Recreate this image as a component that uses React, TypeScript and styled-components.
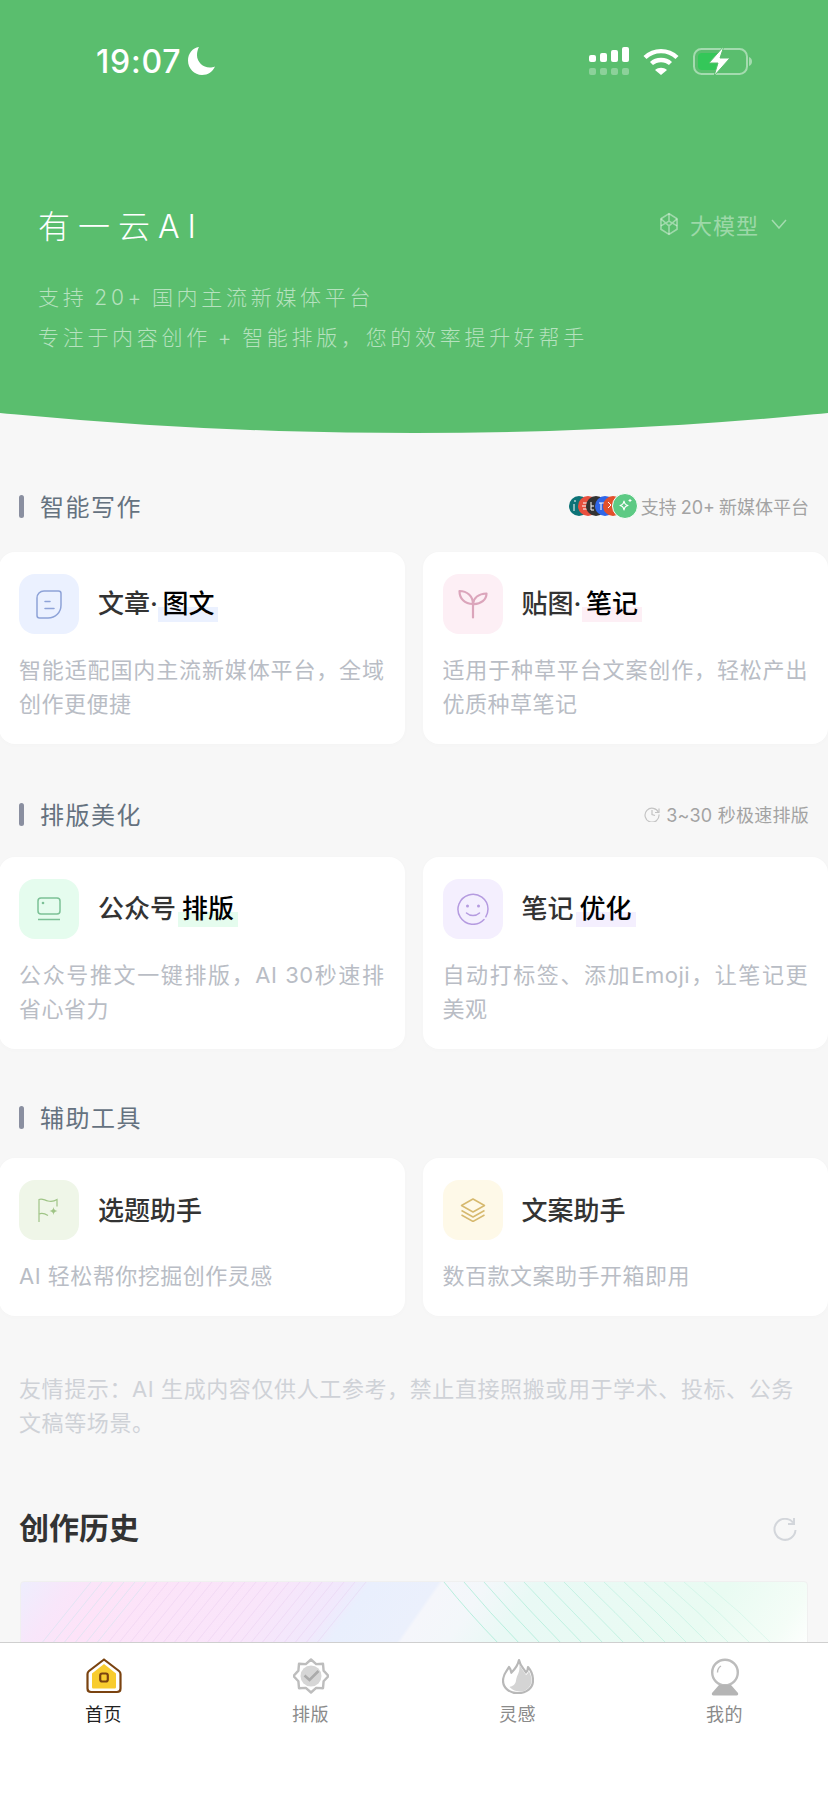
import React from 'react';
import styled, { createGlobalStyle } from 'styled-components';

const GlobalStyle = createGlobalStyle`
  html, body {
    margin: 0;
    padding: 0;
    background: #f7f7f7;
    font-family: Inter, "Noto Sans CJK SC", sans-serif;
  }
`;

const Page = styled.div`
  position: relative;
  width: 828px;
  height: 1800px;
  overflow: hidden;
  background: #f7f7f7;
`;

const Header = styled.header`
  height: 433px;
  padding-top: 44px;
  box-sizing: border-box;
  background: #5abe6e;
  clip-path: ellipse(1378px 433px at 50% 0);
`;

const StatusBar = styled.div`
  display: flex;
  align-items: center;
  justify-content: space-between;
  height: 34px;
  padding: 0 75px 0 96px;
  color: #fff;
`;

const StatusTime = styled.div`
  display: flex;
  align-items: center;
  gap: 7px;
  font-family: Inter, sans-serif;
  font-size: 32px;
  font-weight: 500;
  letter-spacing: 0.8px;
`;

const StatusIcons = styled.div`
  display: flex;
  align-items: center;
  gap: 14px;
`;

const TitleRow = styled.div`
  display: flex;
  align-items: center;
  justify-content: space-between;
  height: 44px;
  margin-top: 124px;
  padding: 0 41px 0 38px;
`;

const AppTitle = styled.h1`
  margin: 0;
  font-size: 32px;
  font-weight: 300;
  letter-spacing: 8px;
  color: #fff;
`;

const ModelPicker = styled.div`
  display: flex;
  align-items: center;
  gap: 12px;
  font-size: 22px;
  letter-spacing: 1px;
  color: rgba(255, 255, 255, 0.42);
`;

const SubTitle = styled.p`
  margin: 32px 0 0;
  padding: 0 38px;
  font-size: 21px;
  line-height: 40px;
  letter-spacing: 3.7px;
  word-spacing: -2.7px;
  font-weight: 300;
  white-space: nowrap;
  color: rgba(255, 255, 255, 0.56);
`;

const SectionHead = styled.div<{ $top: number; $bottom: number }>`
  display: flex;
  align-items: center;
  justify-content: space-between;
  height: 34px;
  margin: ${(p) => p.$top}px 19px ${(p) => p.$bottom}px 19px;
`;

const SectionTitle = styled.h2`
  display: flex;
  align-items: center;
  gap: 16px;
  margin: 0;
  padding-bottom: 2px;
  font-size: 24px;
  font-weight: 400;
  letter-spacing: 1.5px;
  color: #65727f;

  &::before {
    content: '';
    width: 5px;
    height: 23px;
    margin-top: 2px;
    border-radius: 3px;
    background: #8a8fa0;
  }
`;

const SectionNote = styled.div<{ $loose?: boolean }>`
  display: flex;
  align-items: center;
  gap: ${(p) => (p.$loose ? 6 : 3)}px;
  font-size: 18px;
  letter-spacing: ${(p) => (p.$loose ? 0.25 : 0)}px;
  word-spacing: ${(p) => (p.$loose ? 0 : -1)}px;
  color: #a3a3a3;
`;

const LogoStack = styled.div`
  display: flex;
  align-items: center;
`;

const Logo = styled.span<{ $color: string }>`
  display: flex;
  align-items: center;
  justify-content: center;
  width: 20px;
  height: 20px;
  margin-right: -11.500px;
  border-radius: 50%;
  background: ${(p) => p.$color};
`;

const MainLogo = styled.span`
  position: relative;
  display: flex;
  align-items: center;
  justify-content: center;
  box-sizing: border-box;
  width: 26px;
  height: 26px;
  border: 1px solid #fff;
  border-radius: 50%;
  background: #5dca84;
`;

const CardGrid = styled.div`
  display: grid;
  grid-template-columns: 1fr 1fr;
  gap: 18px;
  margin-left: -1px;
`;

const Card = styled.div`
  padding: 22px 20px 23px;
  border-radius: 16px;
  background: #fff;
  box-shadow: 0 1px 6px rgba(0, 0, 0, 0.015);
`;

const CardHead = styled.div`
  display: flex;
  align-items: center;
  gap: 19px;
`;

const IconBox = styled.div<{ $bg: string }>`
  display: flex;
  align-items: center;
  justify-content: center;
  flex: none;
  width: 60px;
  height: 60px;
  border-radius: 16px;
  background: ${(p) => p.$bg};
`;

const CardTitle = styled.div`
  display: flex;
  align-items: flex-start;
  padding-top: 2px;
  font-size: 26px;
  line-height: 30px;
  font-weight: 500;
  color: #333;
`;

const Dot = styled.span`
  margin-right: -1.500px;
`;

const Mark = styled.span<{ $bg: string }>`
  display: block;
  margin-left: 2px;
  padding: 0 4px 3px;
  color: #000;
  background: linear-gradient(transparent 18px, ${(p) => p.$bg} 18px);
`;

const CardDesc = styled.p`
  margin: 19px 0 0;
  font-size: 22px;
  line-height: 34px;
  letter-spacing: 0.5px;
  text-align: justify;
  color: #b9bdc5;
`;

const Tip = styled.p`
  margin: 56px 20px 0 19px;
  font-size: 22px;
  line-height: 34px;
  letter-spacing: 0.6px;
  color: #cfd2d7;
`;

const HistoryHead = styled.div`
  display: flex;
  align-items: center;
  justify-content: space-between;
  height: 44px;
  margin: 66px 31px 31px 19px;

  svg {
    margin-top: 4px;
  }
`;

const HistoryTitle = styled.h2`
  margin: 0;
  padding-bottom: 5px;
  font-size: 30px;
  font-weight: 700;
  color: #333;
`;

const HistoryCover = styled.div`
  position: relative;
  height: 70px;
  margin: 0 20px;
  overflow: hidden;
  border: 1px solid #f0f0f0;
  border-radius: 4px;
  background: linear-gradient(
    125deg,
    #eeeefd 0%,
    #f8e6fa 6%,
    #fde3f8 11%,
    #f9e5fa 30%,
    #f1e8fc 39%,
    #e9effd 42%,
    #ebf0fc 50%,
    #f5f6fb 50.500%,
    #f3f7fa 56%,
    #e9f9f5 62%,
    #e9fbf2 85%,
    #f4fdf7 95%,
    #fff 100%
  );
`;

const CoverLines = styled.svg`
  position: absolute;
  top: 0;
  left: 0;
`;

const TabBar = styled.nav`
  position: absolute;
  left: 0;
  right: 0;
  bottom: 0;
  display: grid;
  grid-template-columns: repeat(4, 1fr);
  height: 158px;
  box-sizing: border-box;
  border-top: 1px solid #cfcfcf;
  background: #fff;
`;

const Tab = styled.div<{ $active?: boolean }>`
  display: flex;
  flex-direction: column;
  align-items: center;
  padding-top: 15px;
  font-size: 18px;
  line-height: 26px;
  letter-spacing: 0.5px;
  color: ${(p) => (p.$active ? '#222' : '#8a8a8a')};
`;

const TabIcon = styled.div`
  display: flex;
  align-items: flex-start;
  height: 44px;
`;

const SignalIcon = () => (
  <svg width="40" height="28" viewBox="0 0 40 28" fill="#fff">
    <rect x="0" y="8" width="7" height="7" rx="2" />
    <rect x="11" y="6" width="7" height="9" rx="2" />
    <rect x="22" y="3" width="7" height="12" rx="2" />
    <rect x="33" y="0" width="7" height="15" rx="2" />
    <g opacity="0.3">
      <rect x="0" y="21" width="7" height="7" rx="2" />
      <rect x="11" y="21" width="7" height="7" rx="2" />
      <rect x="22" y="21" width="7" height="7" rx="2" />
      <rect x="33" y="21" width="7" height="7" rx="2" />
    </g>
  </svg>
);

const WifiIcon = () => (
  <svg width="36" height="27" viewBox="0 0 36 27" fill="none" stroke="#fff" strokeWidth="4.4">
    <path d="M2 9.500C11 1 25 1 34 9.500" />
    <path d="M8.500 15.500C13.500 10.800 22.500 10.800 27.500 15.500" />
    <path d="M12 22l6 5 6-5c-3.500-3-8.500-3-12 0z" fill="#fff" stroke="none" />
  </svg>
);

const BatteryIcon = () => (
  <svg width="60" height="30" viewBox="0 0 60 30" fill="none">
    <rect x="1" y="3" width="53" height="25" rx="7.500" stroke="#fff" strokeOpacity="0.45" strokeWidth="2" />
    <path d="M56 11c2 .6 3 2.300 3 4.500s-1 3.900-3 4.500z" fill="#fff" fillOpacity="0.45" />
    <rect x="5" y="7" width="22" height="17" rx="4" fill="#34c759" />
    <path d="M31 0L16 17h9l-4 13 16-18h-10z" fill="#fff" stroke="#5abe6e" strokeWidth="1" />
  </svg>
);

const MoonIcon = () => (
  <svg width="27" height="28" viewBox="0 0 27 28" fill="#fff">
    <path d="M11 0C4.500 1 0 6.500 0 13.500 0 21.500 6.300 28 14 28c6 0 10.800-3.300 13-8.500-1.600.8-3.400 1.100-5.300 1.100C15 20.600 9 15 9 8.300 9 5.200 9.700 2.400 11 0z" />
  </svg>
);

const CubeIcon = () => (
  <svg width="18" height="24" viewBox="0 0 19 24" fill="none" stroke="#fff" strokeOpacity="0.42" strokeWidth="1.700" strokeLinejoin="round">
    <path d="M9.500 1L18 6.500v11L9.500 23 1 17.500v-11z" />
    <path d="M9.500 1v8L1 14M9.500 9l8.500 5M9.500 23v-9L1 6.500M9.500 14L18 6.500" />
  </svg>
);

const ChevronIcon = () => (
  <svg width="16" height="10" viewBox="0 0 16 10" fill="none" stroke="#fff" strokeOpacity="0.45" strokeWidth="1.500">
    <path d="M1 1l7 8 7-8" />
  </svg>
);

const SparkleIcon = () => (
  <svg width="16" height="16" viewBox="0 0 16 16" fill="none" stroke="#fff" strokeWidth="1.200" strokeLinejoin="round">
    <path d="M7 3c.5 3 1.500 4 4 4.500-2.500.5-3.500 1.500-4 4.500-.5-3-1.500-4-4-4.500 2.500-.5 3.500-1.500 4-4.500z" />
    <path d="M13 1v3M11.500 2.500h3" strokeWidth="1" />
  </svg>
);

const LogoMark = ({ d }: { d: string }) => (
  <svg width="20" height="20" viewBox="0 0 20 20" stroke="#fff" strokeWidth="1" fill="none">
    <path d={d} />
  </svg>
);

const ClockIcon = () => (
  <svg width="16" height="16" viewBox="0 0 16 16" fill="none" stroke="#c4c4c4" strokeWidth="1.200">
    <path d="M14.500 6.500A7 7 0 1 0 15 8.500" />
    <path d="M8 4v4.500l3 1M15 2.500v4h-4" />
  </svg>
);

const DocIcon = () => (
  <svg width="26" height="29" viewBox="0 0 26 29" fill="none" stroke="#8ea3d8" strokeWidth="1.500">
    <path d="M8 1h14.500c1.400 0 2.500 1.100 2.500 2.500V15c0 7.500-5.500 13-13 13H3.500C2 28 1 27 1 25.500V8c0-4 3-7 7-7z" />
    <path d="M9 11.500h5M9 18.500h9" strokeLinecap="round" />
  </svg>
);

const SproutIcon = () => (
  <svg width="30" height="30" viewBox="0 0 30 30" fill="none" stroke="#dba5bb" strokeWidth="2.200" strokeLinecap="round" strokeLinejoin="round">
    <path d="M15 28.500V15" />
    <path d="M15 15C15 7 9 2 1.500 2 1.500 9.500 6.500 15 15 15z" />
    <path d="M15 15c.5-6 5.500-10 13.500-10.500C28.500 10.500 23 15.500 15 15z" />
  </svg>
);

const ScreenIcon = () => (
  <svg width="24" height="24" viewBox="0 0 24 24" fill="none" stroke="#7cc196" strokeWidth="1.500">
    <rect x="1" y="1" width="22" height="16" rx="3" />
    <path d="M1 22.500h22" />
    <circle cx="6" cy="6" r="1.300" fill="#7cc196" stroke="none" />
  </svg>
);

const SmileIcon = () => (
  <svg width="32" height="32" viewBox="0 0 32 32" fill="none" stroke="#b59be0" strokeWidth="1.500" strokeLinecap="round">
    <path d="M27 26.500A15 15 0 1 1 31 16c0 3-.8 5.500-2.200 7.800" />
    <path d="M9.500 20c3.500 3.300 9.500 3.300 13 0" />
    <circle cx="10.500" cy="13" r="1.500" fill="#b59be0" stroke="none" />
    <circle cx="21.500" cy="13" r="1.500" fill="#b59be0" stroke="none" />
  </svg>
);

const FlagIcon = () => (
  <svg width="22" height="24" viewBox="0 0 22 24" fill="none" stroke="#9fc486" strokeWidth="1.200">
    <path d="M1 24V1.500c3-1.500 5 .5 9 1.500 3 .7 6 .5 9-1.500v7" />
    <path d="M1 16c3-1.500 5-1 9 1.500" />
    <path d="M15.500 9c.4 2.600 1.400 3.600 4 4-2.600.4-3.600 1.400-4 4-.4-2.600-1.400-3.600-4-4 2.600-.4 3.600-1.400 4-4z" fill="#9fc486" stroke="none" />
  </svg>
);

const LayersIcon = () => (
  <svg width="26" height="24" viewBox="0 0 26 24" fill="none" stroke="#d6b96e" strokeWidth="1.500" strokeLinejoin="round">
    <path d="M13 1l11.500 6.500L13 14 1.500 7.500z" />
    <path d="M1.500 12.500L13 19l11.500-6.500" />
    <path d="M1.500 17L13 23.500 24.500 17" />
  </svg>
);

const RefreshIcon = () => (
  <svg width="24" height="24" viewBox="0 0 24 24" fill="none" stroke="#d3d6db" strokeWidth="2">
    <path d="M20 4.500A10.500 10.500 0 1 0 22.500 12" />
    <path d="M21 0v6h-6" />
  </svg>
);

const HomeIcon = () => (
  <svg width="36" height="37" viewBox="0 0 36 37">
    <path d="M18 1.500L33 13c1 .8 1.500 1.700 1.500 3v14.500c0 2.200-1.300 3.500-3.500 3.500H5c-2.200 0-3.500-1.300-3.500-3.500V16c0-1.300.5-2.200 1.500-3z" fill="#fff" stroke="#7a4310" strokeWidth="2.200" strokeLinejoin="round" />
    <path d="M18 6L30 15.500V29c0 1-.6 1.600-1.500 1.600h-21C6.600 30.600 6 30 6 29V15.500z" fill="#f8cc2e" />
    <rect x="14.200" y="15.500" width="7.600" height="8" rx="2" fill="none" stroke="#7a4310" strokeWidth="2.200" />
  </svg>
);

const BadgeIcon = () => (
  <svg width="36" height="37" viewBox="0 0 36 37">
    <path d="M18 1.500l5.200 4.600 6.800-.3.600 6.800 4.900 5.400-4.900 5.300-.6 6.900-6.800-.3L18 34.500l-5.200-4.600-6.800.3-.6-6.900L.5 18l4.900-5.400.6-6.800 6.800.3z" fill="#fff" stroke="#bdbdbd" strokeWidth="2.400" strokeLinejoin="round" />
    <circle cx="18" cy="18" r="10.500" fill="#d6d6d6" />
    <path d="M11.500 17.500l5 4.500 9-9" fill="none" stroke="#ababab" strokeWidth="2.600" />
  </svg>
);

const FlameIcon = () => (
  <svg width="32" height="37" viewBox="0 0 32 37">
    <path d="M17 2c1 6 5 8.500 7 12.500 1.500-1.500 2-3.500 2-5.500 3.500 4 5 9 5 13.500C31 30 24.500 35 16 35S1 30 1 22.500C1 16 5 13 7 9c1.500 1.800 2.200 3.800 2.300 5.800C13 11 16 7.500 17 2z" fill="#fff" stroke="#b8b8b8" strokeWidth="2.200" strokeLinejoin="round" />
    <path d="M17.500 6c1 4 4 6.500 6.500 11 1.500-1 2.300-2.500 2.800-4 1.600 3 2.700 6 2.700 9.500 0 6-5 11-11 11-4.500 0-8-1.500-11-4.500 3.500-1 6-2.500 6.500-6.500.4-3 1.500-5 2.500-7.500 1-2.500 1-5 1-9z" fill="#d4d4d4" />
  </svg>
);

const BallIcon = () => (
  <svg width="30" height="38" viewBox="0 0 30 38">
    <circle cx="15" cy="14.500" r="12.800" fill="#fff" stroke="#bcbcbc" strokeWidth="2.400" />
    <path d="M7.500 14.500c0-3 1.300-5.200 3.500-6.500" fill="none" stroke="#bcbcbc" strokeWidth="1.400" />
    <path d="M9 27h12l7 8c.5 1.500 0 2.500-1.500 2.500h-23C2 37.500 1.500 36.500 2 35z" fill="#b5b5b5" />
  </svg>
);

const sourceLogos = [
  { color: '#0d7377', mark: 'M5 8v7M5 5h2' },
  { color: '#e8503f', mark: 'M5 7h4M4 10h5M5 13h4' },
  { color: '#333333', mark: 'M5 6v8h3M5 10h3' },
  { color: '#2f66e8', mark: 'M4 7h5M6 7v7' },
  { color: '#e2502c', mark: 'M5 6l3 3-3 3' },
];

const rightLines = Array.from({ length: 14 }, (_, i) => i);
const leftLines = Array.from({ length: 26 }, (_, i) => i);

const Title = ({ plain, dot, marked, bg }: { plain: string; dot?: boolean; marked?: string; bg?: string }) => (
  <CardTitle>
    {plain}
    {dot && <Dot>·</Dot>}
    {marked && <Mark $bg={bg as string}>{marked}</Mark>}
  </CardTitle>
);

export default function App() {
  return (
    <Page>
      <GlobalStyle />
      <Header>
        <StatusBar>
          <StatusTime>
            19:07
            <MoonIcon />
          </StatusTime>
          <StatusIcons>
            <SignalIcon />
            <WifiIcon />
            <BatteryIcon />
          </StatusIcons>
        </StatusBar>
        <TitleRow>
          <AppTitle>有一云AI</AppTitle>
          <ModelPicker>
            <CubeIcon />
            大模型
            <ChevronIcon />
          </ModelPicker>
        </TitleRow>
        <SubTitle>
          支持 20+ 国内主流新媒体平台
          <br />
          专注于内容创作 + 智能排版，您的效率提升好帮手
        </SubTitle>
      </Header>

      <SectionHead $top={56} $bottom={29}>
        <SectionTitle>智能写作</SectionTitle>
        <SectionNote>
          <LogoStack>
            {sourceLogos.map((logo) => (
              <Logo key={logo.color} $color={logo.color}>
                <LogoMark d={logo.mark} />
              </Logo>
            ))}
            <MainLogo>
              <SparkleIcon />
            </MainLogo>
          </LogoStack>
          支持 20+ 新媒体平台
        </SectionNote>
      </SectionHead>
      <CardGrid>
        <Card>
          <CardHead>
            <IconBox $bg="#ebf1ff">
              <DocIcon />
            </IconBox>
            <Title plain="文章" dot marked="图文" bg="#ebf1ff" />
          </CardHead>
          <CardDesc>智能适配国内主流新媒体平台，全域创作更便捷</CardDesc>
        </Card>
        <Card>
          <CardHead>
            <IconBox $bg="#fdeff5">
              <SproutIcon />
            </IconBox>
            <Title plain="贴图" dot marked="笔记" bg="#fdeff5" />
          </CardHead>
          <CardDesc>适用于种草平台文案创作，轻松产出优质种草笔记</CardDesc>
        </Card>
      </CardGrid>

      <SectionHead $top={53} $bottom={26}>
        <SectionTitle>排版美化</SectionTitle>
        <SectionNote $loose>
          <ClockIcon />
          3~30 秒极速排版
        </SectionNote>
      </SectionHead>
      <CardGrid>
        <Card>
          <CardHead>
            <IconBox $bg="#e5fcee">
              <ScreenIcon />
            </IconBox>
            <Title plain="公众号" marked="排版" bg="#e5fcee" />
          </CardHead>
          <CardDesc>公众号推文一键排版，AI 30秒速排省心省力</CardDesc>
        </Card>
        <Card>
          <CardHead>
            <IconBox $bg="#f4effe">
              <SmileIcon />
            </IconBox>
            <Title plain="笔记" marked="优化" bg="#f4effe" />
          </CardHead>
          <CardDesc>自动打标签、添加Emoji，让笔记更美观</CardDesc>
        </Card>
      </CardGrid>

      <SectionHead $top={51} $bottom={24}>
        <SectionTitle>辅助工具</SectionTitle>
      </SectionHead>
      <CardGrid>
        <Card>
          <CardHead>
            <IconBox $bg="#eff6e8">
              <FlagIcon />
            </IconBox>
            <Title plain="选题助手" />
          </CardHead>
          <CardDesc>AI 轻松帮你挖掘创作灵感</CardDesc>
        </Card>
        <Card>
          <CardHead>
            <IconBox $bg="#fef9e8">
              <LayersIcon />
            </IconBox>
            <Title plain="文案助手" />
          </CardHead>
          <CardDesc>数百款文案助手开箱即用</CardDesc>
        </Card>
      </CardGrid>

      <Tip>友情提示：AI 生成内容仅供人工参考，禁止直接照搬或用于学术、投标、公务文稿等场景。</Tip>

      <HistoryHead>
        <HistoryTitle>创作历史</HistoryTitle>
        <RefreshIcon />
      </HistoryHead>
      <HistoryCover>
        <CoverLines width="788" height="70" viewBox="0 0 788 70" fill="none">
          {rightLines.map((i) => (
            <path
              key={i}
              d={`M${423 + i * 20} 0Q${447 + i * 21} 30 ${478 + i * 21} 62`}
              stroke="#a8ecd6"
              strokeOpacity={1 - i * 0.05}
              strokeWidth="0.8"
            />
          ))}
          {leftLines.map((i) => (
            <path
              key={i}
              d={`M${70 + i * 11} 0L${20 + i * 11} 62`}
              stroke={i < 6 ? '#bfe3ea' : '#e6c8ee'}
              strokeOpacity="0.5"
              strokeWidth="0.8"
            />
          ))}
        </CoverLines>
      </HistoryCover>

      <TabBar>
        <Tab $active>
          <TabIcon>
            <HomeIcon />
          </TabIcon>
          首页
        </Tab>
        <Tab>
          <TabIcon>
            <BadgeIcon />
          </TabIcon>
          排版
        </Tab>
        <Tab>
          <TabIcon>
            <FlameIcon />
          </TabIcon>
          灵感
        </Tab>
        <Tab>
          <TabIcon>
            <BallIcon />
          </TabIcon>
          我的
        </Tab>
      </TabBar>
    </Page>
  );
}
